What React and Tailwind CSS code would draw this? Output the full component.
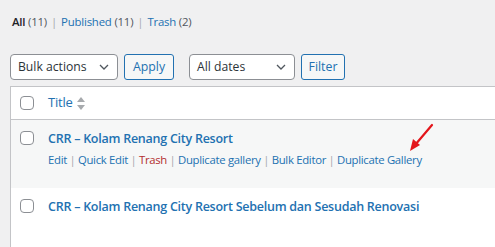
const font = { fontFamily: '"Open Sans", "Noto Sans", sans-serif' };

const Sep = ({ gap = "mx-[4px]" }) => (
  <span className={`text-[#a7aaad] ${gap}`}>|</span>
);

const Checkbox = () => (
  <span className="block w-[14px] h-[14px] rounded-[4px] border border-[#8c8f94] bg-white" />
);

const Chevron = () => (
  <svg width="10" height="6" viewBox="0 0 10 6">
    <path d="M1 1 L5 5 L9 1" fill="none" stroke="#50575e" strokeWidth="1.3" />
  </svg>
);

const Select = ({ label, width }) => (
  <div
    className={`${width} h-[26px] flex items-center justify-between pl-[7px] pr-[8px] bg-white border border-[#8c8f94] rounded-[4px] text-[12.2px] text-[#2c3338]`}
  >
    <span>{label}</span>
    <Chevron />
  </div>
);

const Button = ({ label, width }) => (
  <div
    className={`${width} h-[26px] flex items-center justify-center bg-[#f6f7f7] border border-[#2271b1] rounded-[3px] text-[12.3px] text-[#2271b1]`}
  >
    {label}
  </div>
);

const App = () => {
  return (
    <div
      style={font}
      className="relative w-full h-[247px] overflow-hidden bg-[#f0f0f1] pl-[10px] flex flex-col"
    >
      <div className="pt-[12px] pl-[2px] text-[11.4px] leading-[20px] text-[#50575e] tracking-[-0.2px]">
        <span className="font-semibold text-[#1d2327]">All</span> (11)
        <Sep />
        <span className="text-[#2271b1]">Published</span> (11)
        <Sep />
        <span className="text-[#2271b1]">Trash</span> (2)
      </div>

      <div className="mt-[22px] flex items-center">
        <Select label="Bulk actions" width="w-[108px]" />
        <div className="ml-[6px]">
          <Button label="Apply" width="w-[50px]" />
        </div>
        <div className="ml-[15px]">
          <Select label="All dates" width="w-[106px]" />
        </div>
        <div className="ml-[6px]">
          <Button label="Filter" width="w-[44px]" />
        </div>
      </div>

      <div className="mt-[6px] flex-1 border-l border-t border-[#c3c4c7] bg-white">
        <div className="h-[33px] flex items-center border-b border-[#c3c4c7]">
          <div className="w-[37px] pl-[9px]">
            <Checkbox />
          </div>
          <span className="text-[13px] text-[#2271b1] tracking-[-0.2px]">Title</span>
          <svg width="8" height="13" viewBox="0 0 8 13" className="ml-[4px]">
            <path d="M4 0 L8 5 L0 5 Z" fill="#a7aaad" />
            <path d="M4 13 L8 8 L0 8 Z" fill="#a7aaad" />
          </svg>
        </div>

        <div className="h-[68px] bg-[#f6f7f7] flex items-start pt-[10px]">
          <div className="w-[37px] pl-[9px] pt-[1px]">
            <Checkbox />
          </div>
          <div className="flex flex-col">
            <span className="text-[12.5px] font-semibold leading-[18px] text-[#2271b1] tracking-[-0.25px]">
              CRR – Kolam Renang City Resort
            </span>
            <div className="mt-[3px] text-[11.35px] leading-[18px] text-[#a7aaad] tracking-[-0.3px] whitespace-nowrap">
              <span className="text-[#2271b1]">Edit</span>
              <Sep gap="mx-[2.5px]" />
              <span className="text-[#2271b1]">Quick Edit</span>
              <Sep gap="mx-[2.5px]" />
              <span className="text-[#b32d2e]">Trash</span>
              <Sep gap="mx-[2.5px]" />
              <span className="text-[#2271b1]">Duplicate gallery</span>
              <Sep gap="mx-[2.5px]" />
              <span className="text-[#2271b1]">Bulk Editor</span>
              <Sep gap="mx-[2.5px]" />
              <span className="text-[#2271b1]">Duplicate Gallery</span>
            </div>
          </div>
        </div>

        <div className="flex items-start pt-[10px]">
          <div className="w-[37px] pl-[9px] pt-[1px]">
            <Checkbox />
          </div>
          <span className="text-[12.5px] font-semibold leading-[18px] text-[#2271b1] tracking-[-0.25px] whitespace-nowrap">
            CRR – Kolam Renang City Resort Sebelum dan Sesudah Renovasi
          </span>
        </div>
      </div>

      <svg
        className="absolute left-[405px] top-[120px]"
        width="32"
        height="36"
        viewBox="0 0 32 36"
      >
        <line x1="27" y1="5" x2="10" y2="25" stroke="#e3161b" strokeWidth="2.2" strokeLinecap="round" />
        <path d="M5 31 L8 19 L15 25 Z" fill="#e3161b" />
      </svg>
    </div>
  );
};

export default App;
